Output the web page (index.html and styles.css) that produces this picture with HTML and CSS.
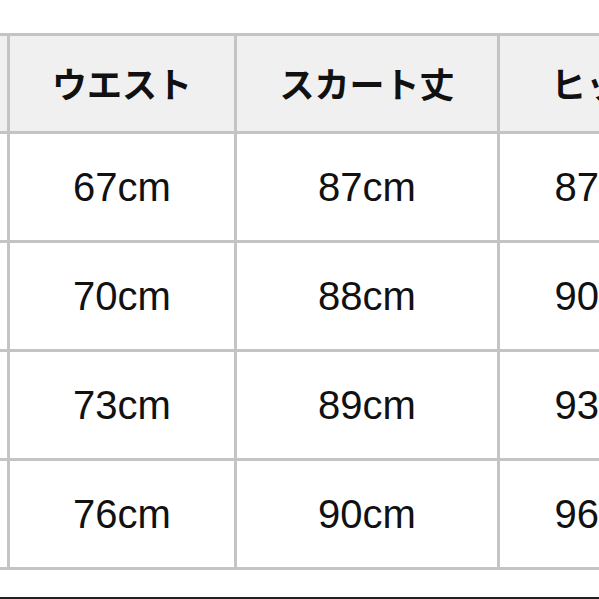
FILE: index.html
```html
<!DOCTYPE html>
<html lang="ja">
<head>
<meta charset="utf-8">
<link rel="stylesheet" href="styles.css">
</head>
<body>
<div class="page">
  <div class="viewport">
    <table class="size-table">
      <colgroup>
        <col class="c1"><col class="c2"><col class="c3"><col class="c4">
      </colgroup>
      <thead>
        <tr><th>サイズ</th><th>ウエスト</th><th>スカート丈</th><th>ヒップ</th></tr>
      </thead>
      <tbody>
        <tr><td>S</td><td>67cm</td><td>87cm</td><td>87cm</td></tr>
        <tr><td>M</td><td>70cm</td><td>88cm</td><td>90cm</td></tr>
        <tr><td>L</td><td>73cm</td><td>89cm</td><td>93cm</td></tr>
        <tr><td>XL</td><td>76cm</td><td>90cm</td><td>96cm</td></tr>
      </tbody>
    </table>
  </div>
  <div class="bottom-rule"></div>
</div>
</body>
</html>
```
FILE: styles.css
```css
html, body {
  margin: 0;
  padding: 0;
  background: #ffffff;
}
.page {
  width: 599px;
  height: 599px;
  display: flex;
  flex-direction: column;
  overflow: hidden;
}
.viewport {
  width: 599px;
  overflow: hidden;
  padding-top: 33px;
}
.size-table {
  border-collapse: separate;
  border-spacing: 0;
  table-layout: fixed;
  width: 903px;
  margin-left: -193px;
  border-top: 3px solid #c4c4c4;
  color: #111111;
}
.c1 { width: 203px; }
.c2 { width: 227px; }
.c3 { width: 263px; }
.c4 { width: 210px; }
.size-table th,
.size-table td {
  border-right: 3px solid #c4c4c4;
  border-bottom: 3px solid #c4c4c4;
  padding: 0;
  text-align: center;
  vertical-align: middle;
}
.size-table th {
  height: 93px;
  background: #f0f0f0;
  font-family: "Noto Sans CJK JP", "Noto Sans", sans-serif;
  font-weight: 700;
  font-size: 35px;
  padding-bottom: 2px;
}
.size-table td {
  height: 106px;
  background: #ffffff;
  font-family: "Liberation Sans", Arial, sans-serif;
  font-size: 40px;
  font-weight: 400;
}
.bottom-rule {
  margin-top: auto;
  height: 2px;
  background: #222222;
}
```
